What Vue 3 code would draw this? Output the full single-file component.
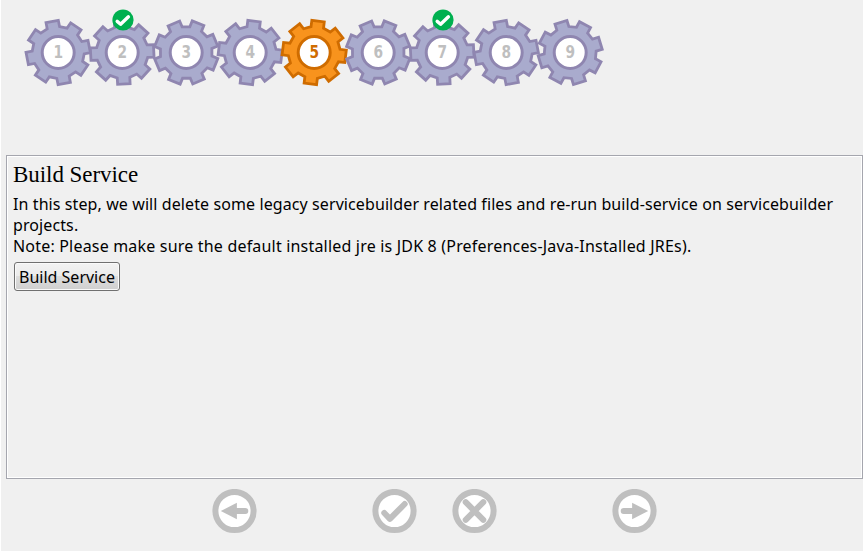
<script setup>
const rotations = [-11, -3, 22, 7, 7, 22, -3, -11, -17]
const steps = rotations.map((rotation, i) => ({
  number: i + 1,
  rotation,
  active: i === 4,
  done: i === 1 || i === 6,
}))

const point = (deg, r) => {
  const a = (deg * Math.PI) / 180
  return `${(Math.sin(a) * r).toFixed(2)},${(-Math.cos(a) * r).toFixed(2)}`
}

const gear = (rotation) =>
  Array.from({ length: 8 }, (_, i) => {
    const c = rotation + i * 45
    return [point(c - 14, 26), point(c - 11.2, 32.2), point(c + 11.2, 32.2), point(c + 14, 26)].join(' ')
  }).join(' ')

const actions = [
  { name: 'Back', icon: 'back' },
  { name: 'Finish', icon: 'check' },
  { name: 'Skip', icon: 'cross' },
  { name: 'Next', icon: 'next' },
]
</script>

<template>
  <main class="wizard">
    <nav class="steps">
      <div v-for="s in steps" :key="s.number" class="step" :class="{ active: s.active }">
        <svg class="gear" viewBox="-35.2 -35.5 70 70">
          <polygon class="body" :points="gear(s.rotation)" />
          <circle class="hub" r="16" />
          <text class="number" x="-4.8" y="5.1" textLength="9.6" lengthAdjust="spacingAndGlyphs">{{ s.number }}</text>
        </svg>
        <svg v-if="s.done" class="badge" viewBox="0 0 22 22">
          <circle cx="11" cy="11" r="10.6" fill="#00b050" />
          <path d="M5.2 12.4 8.6 15.2 16.4 7.8" fill="none" stroke="#fff" stroke-width="3.4" stroke-linecap="round" stroke-linejoin="round" />
        </svg>
      </div>
    </nav>

    <section class="panel">
      <h1>Build Service</h1>
      <p class="line first">In this step, we will delete some legacy servicebuilder related files and re-run build-service on servicebuilder</p>
      <p class="line second">projects.</p>
      <p class="line third">Note: Please make sure the default installed jre is JDK 8 (Preferences-Java-Installed JREs).</p>
      <button type="button"><span>Build Service</span></button>
    </section>

    <footer class="actions">
      <button v-for="a in actions" :key="a.icon" type="button" class="action" :class="a.icon">
        <svg viewBox="-22.5 -22 45 45">
          <circle r="19.1" fill="#fff" stroke="#bfbfbf" stroke-width="6" />
          <g v-if="a.icon === 'back' || a.icon === 'next'" :transform="a.icon === 'next' ? 'scale(-1,1)' : undefined">
            <path d="M-13.7 0 2.4-8.2V8.2Z" fill="#bfbfbf" />
            <path d="M1 0H10.8" stroke="#bfbfbf" stroke-width="6" stroke-linecap="round" />
          </g>
          <path v-else-if="a.icon === 'check'" d="M-10.2 2 -4.6 7.8 10.2-7" class="mark" />
          <path v-else d="M-8.8-8.8 8.8 8.8M8.8-8.8-8.8 8.8" class="mark" />
        </svg>
      </button>
    </footer>
  </main>
</template>

<style>
body {
  margin: 0;
  overflow: hidden;
}
</style>

<style scoped>
.wizard {
  box-sizing: border-box;
  width: 863px;
  height: 551px;
  display: flex;
  flex-direction: column;
  background: #f0f0f0;
  border-left: 1px solid #fff;
  font-family: "Noto Sans", "Open Sans", sans-serif;
  color: #000;
}
.steps {
  display: flex;
  height: 155px;
  padding-left: 24px;
  box-sizing: border-box;
}
.step {
  position: relative;
  width: 64px;
  height: 70px;
  margin-top: 17px;
}
.gear {
  display: block;
  width: 70px;
  height: 70px;
  margin-left: -2px;
}
.body {
  fill: #a9abcd;
  stroke: #8f86b0;
  stroke-width: 2.8;
}
.hub {
  fill: #fff;
  stroke: #8f86b0;
  stroke-width: 3;
}
.number {
  font: bold 17px "DejaVu Sans", sans-serif;
  fill: #bfbfbf;
}
.active .body {
  fill: #f8931d;
  stroke: #cf6c00;
}
.active .hub {
  stroke: #cf6c00;
}
.active .number {
  fill: #cf6c00;
}
.badge {
  position: absolute;
  left: 22.6px;
  top: -8.3px;
  width: 22px;
  height: 22px;
}
.panel {
  box-sizing: border-box;
  height: 324px;
  margin-left: 5px;
  padding: 5px 6px;
  border: 1px solid #a5a6ae;
  box-shadow: inset 0 0 0 1px #fff;
}
h1 {
  margin: 0 0 6px;
  font: 23px/27px "Liberation Serif", serif;
  letter-spacing: -0.05px;
}
.line {
  margin: 0;
  font-size: 16px;
  line-height: 21px;
  white-space: nowrap;
}
.first {
  letter-spacing: 0.095px;
}
.second {
  letter-spacing: 0.1px;
}
.third {
  letter-spacing: 0.19px;
}
.panel button {
  display: flex;
  align-items: center;
  justify-content: center;
  box-sizing: border-box;
  width: 106px;
  height: 29px;
  margin: 5px 0 0 1px;
  padding: 2px 0 0;
  border: 1px solid #707070;
  border-radius: 3px;
  background: linear-gradient(#f2f2f2 0, #ebebeb 49%, #dddddd 50%, #cfcfcf 100%);
  box-shadow: inset 0 0 0 1px #fafafa;
  font: 16px/21px "Noto Sans", "Open Sans", sans-serif;
  color: #000;
  white-space: nowrap;
}
.actions {
  display: flex;
  padding: 10px 0 0 211px;
}
.action {
  width: 45px;
  height: 45px;
  padding: 0;
  border: 0;
  background: none;
}
.action svg {
  display: block;
  width: 45px;
  height: 45px;
}
.action.check {
  margin-left: 114.5px;
}
.action.cross {
  margin-left: 35px;
}
.action.next {
  margin-left: 115.5px;
}
.mark {
  fill: none;
  stroke: #bfbfbf;
  stroke-width: 6;
  stroke-linecap: round;
  stroke-linejoin: round;
}
</style>
